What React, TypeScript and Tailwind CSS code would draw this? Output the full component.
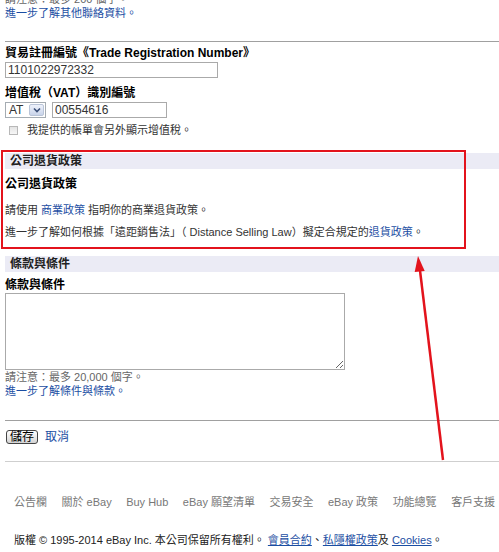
import React from 'react'

const footerLinks = ['公告欄', '關於 eBay', 'Buy Hub', 'eBay 願望清單', '交易安全', 'eBay 政策', '功能總覽', '客戶支援']

function SectionHeader({ title }: { title: string }) {
  return (
    <div className="flex h-[16px] items-center bg-[#ebebf5] pl-[5px] text-[12px] font-bold text-[#222]">
      {title}
    </div>
  )
}

export default function App() {
  return (
    <div className="relative h-[552px] w-[499px] overflow-hidden bg-white font-['Liberation_Sans','Noto_Sans_CJK_TC',sans-serif] text-[11px] leading-[14px] text-[#333]">
      <div className="pl-[5px]">
        <p className="-mt-[8px] text-[#666]">請注意：最多 200 個字。</p>
        <a href="#" className="block text-[#1b4ea3]">進一步了解其他聯絡資料。</a>

        <div className="mt-[21px] border-t border-[#a0a0a0]" />

        {/* Trade registration */}
        <label className="mt-[4px] block text-[12px] font-bold text-black">貿易註冊編號《Trade Registration Number》</label>
        <input
          readOnly
          value="1101022972332"
          className="mt-[2px] block h-[16px] w-[213px] border border-[#aaaaaa] px-[2px] text-[12px] text-[#333] outline-none"
        />

        {/* VAT */}
        <label className="mt-[8px] block text-[12px] font-bold text-black">增值稅（VAT）識別編號</label>
        <div className="mt-[2px] flex items-center gap-[6px]">
          <div className="flex h-[16px] w-[41px] items-center border border-[#a5acb2] bg-white">
            <span className="flex-1 pl-[3px] text-[12px] text-[#333]">AT</span>
            <span className="mr-[1px] flex h-[12px] w-[15px] items-center justify-center rounded-[2px] border border-[#b9c4d8] bg-gradient-to-b from-[#eef2fb] to-[#c9d4ea]">
              <svg width="8" height="6" viewBox="0 0 8 6">
                <polyline points="1,1.5 4,4.5 7,1.5" fill="none" stroke="#3b4f78" strokeWidth="1.6" />
              </svg>
            </span>
          </div>
          <input
            readOnly
            value="00554616"
            className="block h-[16px] w-[115px] border border-[#aaaaaa] px-[2px] text-[12px] text-[#333] outline-none"
          />
        </div>
        <div className="mt-[5px] flex items-center">
          <span className="ml-[4px] h-[9px] w-[9px] border border-[#b8b8b8] bg-gradient-to-b from-[#e4e4e4] to-[#f7f7f7]" />
          <span className="ml-[9px] text-[#333]">我提供的帳單會另外顯示增值稅。</span>
        </div>

        {/* Return policy */}
        <div className="mt-[16px]">
          <SectionHeader title="公司退貨政策" />
        </div>
        <p className="mt-[8px] text-[12px] font-bold text-black">公司退貨政策</p>
        <p className="mt-[12px]">
          請使用 <a href="#" className="text-[#1b4ea3]">商業政策</a> 指明你的商業退貨政策。
        </p>
        <p className="mt-[8px]">
          進一步了解如何根據「遠距銷售法」（ Distance Selling Law）擬定合規定的<a href="#" className="text-[#1b4ea3]">退貨政策</a>。
        </p>

        {/* Terms */}
        <div className="mt-[17px]">
          <SectionHeader title="條款與條件" />
        </div>
        <label className="mt-[6px] block text-[12px] font-bold text-black">條款與條件</label>
        <textarea className="mt-[1px] block h-[77px] w-[340px] border border-[#aaaaaa] outline-none" />
        <p className="text-[#666]">請注意：最多 20,000 個字。</p>
        <a href="#" className="block text-[#1b4ea3]">進一步了解條件與條款。</a>

        <div className="mt-[22px] border-t border-[#a0a0a0]" />

        <div className="mt-[9px] flex items-center gap-[7px]">
          <button className="ml-[1px] flex h-[14px] w-[32px] items-center justify-center rounded-[3px] border border-[#444] bg-gradient-to-b from-white to-[#d4d4d4] text-[12px] leading-none text-black">
            儲存
          </button>
          <a href="#" className="text-[12px] text-[#1b4ea3]">取消</a>
        </div>

        <div className="mt-[17px] border-t border-[#cfcfcf]" />
      </div>

      {/* Footer */}
      <div className="mt-[33px] flex gap-[14.5px] pl-[14px] text-[11px] text-[#777]">
        {footerLinks.map(l => (
          <a key={l} href="#" className="whitespace-nowrap">{l}</a>
        ))}
      </div>
      <p className="mt-[24px] whitespace-nowrap pl-[14px] text-[11px] text-[#222]">
        版權 © 1995-2014 eBay Inc. 本公司保留所有權利。{' '}
        <a href="#" className="text-[#1b4ea3] underline">會員合約</a>、
        <a href="#" className="text-[#1b4ea3] underline">私隱權政策</a>及{' '}
        <a href="#" className="text-[#1b4ea3] underline">Cookies</a>。
      </p>

      {/* Annotation */}
      <div className="pointer-events-none absolute left-[1px] top-[150px] h-[99px] w-[465px] border-2 border-[#e3131c]" />
      <svg className="pointer-events-none absolute left-0 top-0" width="499" height="552">
        <line x1="443" y1="460" x2="419.7" y2="268" stroke="#e3131c" strokeWidth="2.5" />
        <polygon points="418,256 424.7,271 414.7,272" fill="#e3131c" />
      </svg>
    </div>
  )
}
